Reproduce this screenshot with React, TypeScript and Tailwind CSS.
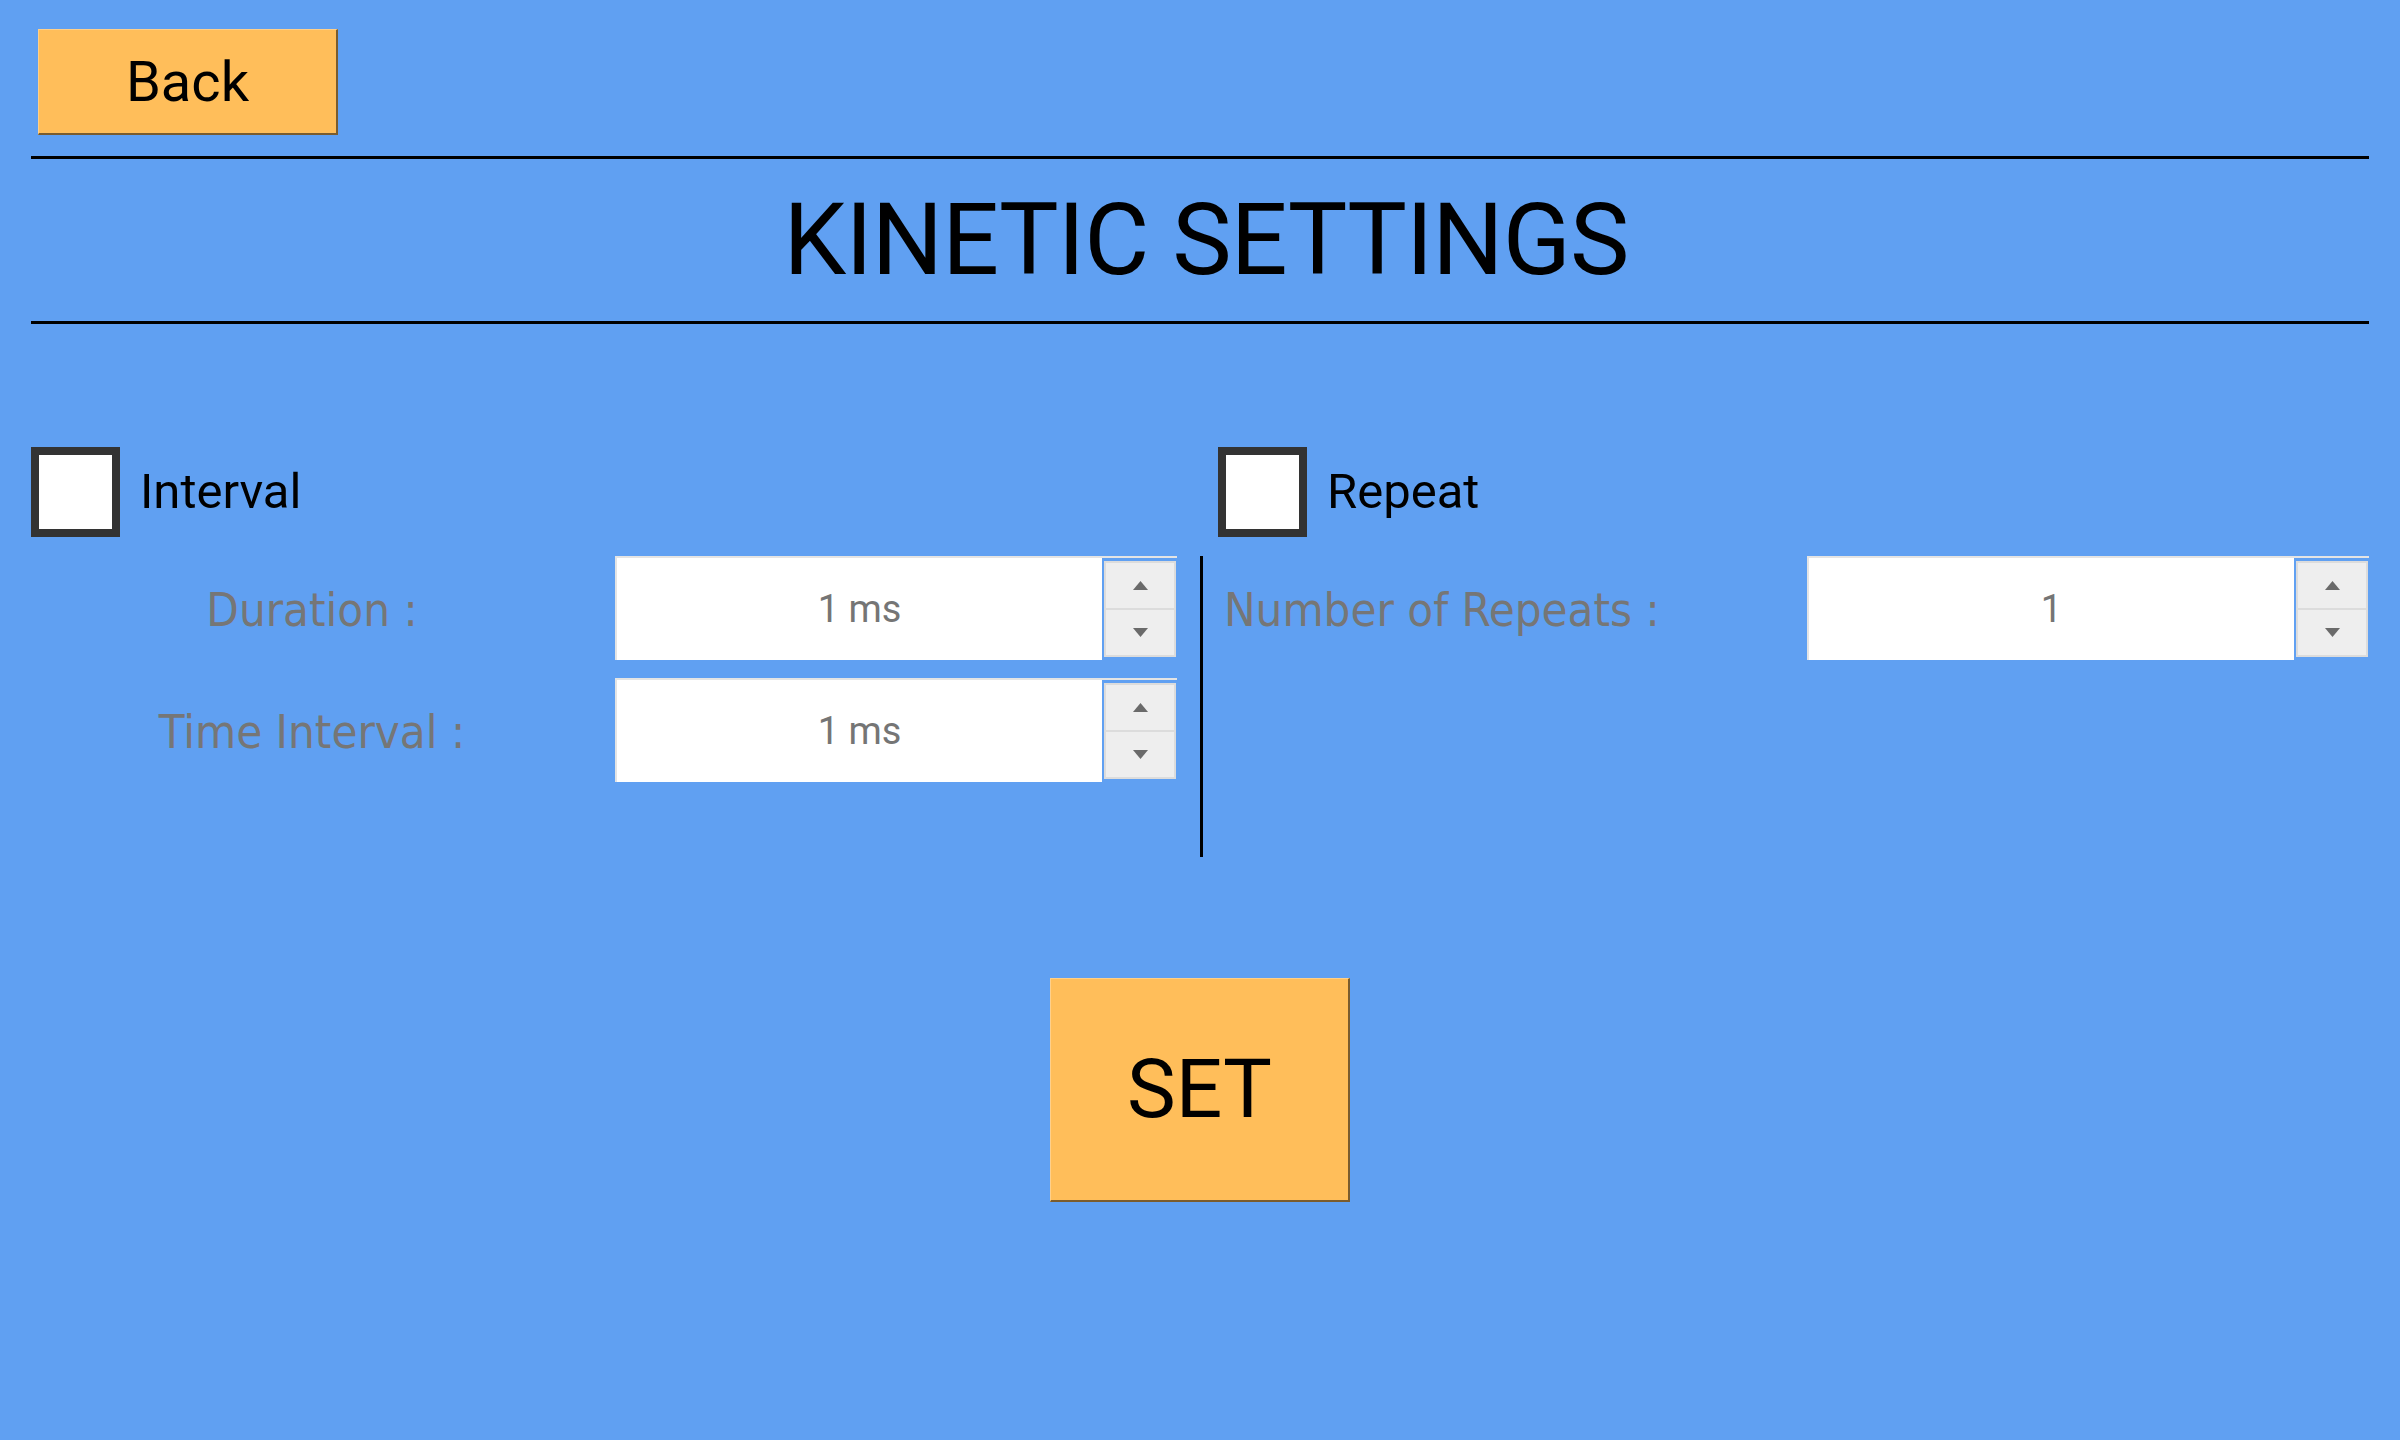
import React from "react";

function SpinBox({ value }: { value: string }) {
  return (
    <div className="relative flex h-[104px] w-[562px] border-t-2 border-l-2 border-[#e4e4e4]">
      <div className="flex h-[102px] w-[485px] items-center justify-center bg-white text-[38px] text-[#757575] [font-family:Roboto,sans-serif]">
        {value}
      </div>
      <div className="ml-[2px] mt-[3px] flex h-[96px] w-[72px] flex-col border-2 border-[#dcdcdc] bg-[#eeeeee]">
        <div className="flex flex-1 items-center justify-center border-b-2 border-[#dcdcdc]">
          <svg width="15" height="9" viewBox="0 0 15 9"><path d="M0 9 L7.5 0 L15 9 Z" fill="#6a6a6a" /></svg>
        </div>
        <div className="flex flex-1 items-center justify-center">
          <svg width="15" height="9" viewBox="0 0 15 9"><path d="M0 0 L15 0 L7.5 9 Z" fill="#6a6a6a" /></svg>
        </div>
      </div>
    </div>
  );
}

function CheckItem({ label }: { label: string }) {
  return (
    <div className="flex items-center gap-[20px]">
      <div className="h-[90px] w-[89px] border-[8px] border-[#333333] bg-white" />
      <span className="text-[49px] text-black [font-family:Roboto,sans-serif]">{label}</span>
    </div>
  );
}

const labelCls =
  "pt-[5px] text-[47px] text-[#767676] [font-family:'DejaVu_Sans_Condensed','DejaVu_Sans',sans-serif] [font-stretch:condensed]";

export default function App() {
  return (
    <div className="flex h-[1440px] w-[2400px] flex-col bg-[#60a0f2] [font-family:Roboto,sans-serif]">
      <div className="pl-[38px] pt-[29px]">
        <button className="flex h-[106px] w-[300px] items-center justify-center border-t border-l border-[#ffd08a] border-r-2 border-b-2 border-r-[#7a5c2e] border-b-[#7a5c2e] bg-[#ffbe5a] text-[56px] text-black [font-family:Roboto,sans-serif]">
          Back
        </button>
      </div>
      <div className="mx-[31px] mt-[21px] h-[3px] bg-black" />
      <div className="flex h-[162px] items-center justify-center pl-[12px] text-[100px] leading-none tracking-[-0.9px] text-black [font-family:Roboto,sans-serif]">
        KINETIC SETTINGS
      </div>
      <div className="mx-[31px] h-[3px] bg-black" />

      <div className="mt-[123px] flex px-[31px]">
        <div className="w-[1187px]">
          <CheckItem label="Interval" />
        </div>
        <CheckItem label="Repeat" />
      </div>

      <div className="mt-[19px] flex px-[31px]">
        <div className="flex w-[1146px] flex-col gap-[18px]">
          <div className="flex items-center">
            <div className={"w-[562px] text-center " + labelCls}>Duration :</div>
            <div className="w-[22px]" />
            <SpinBox value="1 ms" />
          </div>
          <div className="flex items-center">
            <div className={"w-[562px] text-center " + labelCls}>Time Interval :</div>
            <div className="w-[22px]" />
            <SpinBox value="1 ms" />
          </div>
        </div>
        <div className="ml-[23px] h-[301px] w-[3px] bg-black" />
        <div className="flex flex-1 items-start">
          <div className={"flex h-[104px] flex-1 items-center pl-[21px] " + labelCls}>
            Number of Repeats :
          </div>
          <SpinBox value="1" />
        </div>
      </div>

      <div className="mt-[121px] flex justify-center">
        <button className="flex h-[224px] w-[300px] items-center justify-center border-t border-l border-[#ffd08a] border-r-2 border-b-2 border-r-[#7a5c2e] border-b-[#7a5c2e] bg-[#ffbe5a] text-[82px] text-black [font-family:Roboto,sans-serif]">
          SET
        </button>
      </div>
    </div>
  );
}
